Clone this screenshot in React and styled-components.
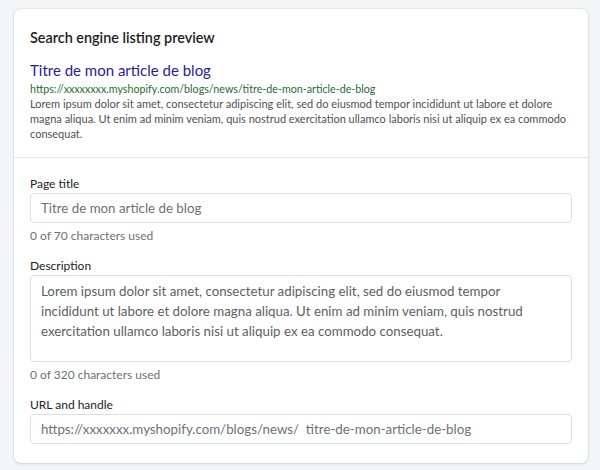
import React from "react";
import styled, { createGlobalStyle } from "styled-components";

const Global = createGlobalStyle`
  html, body { margin: 0; padding: 0; background: #f4f5f7; }
  body { font-family: Lato, "Noto Sans", sans-serif; color: #202223; }
  * { box-sizing: border-box; }
`;

const Page = styled.div`
  width: 600px;
  height: 470px;
  padding: 9px 12px 0 14px;
`;

const Card = styled.section`
  background: #fff;
  border-radius: 7px;
  box-shadow: 0 0 0 1px rgba(63, 63, 68, 0.05), 0 1px 3px rgba(63, 63, 68, 0.15);
  overflow: hidden;
`;

const Section = styled.div`
  padding: ${(p) => p.$pad || "16px"};
  & + & {
    border-top: 1px solid #e4e5e7;
  }
`;

const CardTitle = styled.h2`
  margin: 0 0 11px;
  font-size: 14.4px;
  font-weight: 600;
  line-height: 20px;
  color: #1c1d1f;
`;

const ResultTitle = styled.div`
  font-size: 15px;
  line-height: 22px;
  color: #2a1d92;
`;

const ResultUrl = styled.div`
  font-size: 10.7px;
  line-height: 15px;
  color: #2a6a33;
`;

const ResultDesc = styled.p`
  margin: 0;
  font-size: 11px;
  line-height: 15px;
  color: #4f5154;
`;

const Field = styled.div`
  display: flex;
  flex-direction: column;
  & + & {
    margin-top: 10px;
  }
`;

const Label = styled.label`
  font-size: 12px;
  line-height: 19px;
  color: #202223;
`;

const Input = styled.div`
  border: 1px solid #dcdfe3;
  border-radius: 4px;
  padding: ${(p) => (p.$multi ? "5px 10px" : "4px 10px")};
  height: ${(p) => (p.$multi ? "87px" : "30px")};
  font-size: 13.3px;
  line-height: 20px;
  color: ${(p) => (p.$multi ? "#5c5f62" : "#6d7175")};
  white-space: pre-wrap;
`;

const Help = styled.div`
  font-size: 12px;
  line-height: 20px;
  margin-top: 3px;
  color: #6d7175;
`;

export default function App() {
  const lorem =
    "Lorem ipsum dolor sit amet, consectetur adipiscing elit, sed do eiusmod tempor incididunt ut labore et dolore magna aliqua. Ut enim ad minim veniam, quis nostrud exercitation ullamco laboris nisi ut aliquip ex ea commodo consequat.";
  return (
    <>
      <Global />
      <Page>
        <Card>
          <Section $pad="19px 16px 16px">
            <CardTitle>Search engine listing preview</CardTitle>
            <ResultTitle>Titre de mon article de blog</ResultTitle>
            <ResultUrl>https://xxxxxxxx.myshopify.com/blogs/news/titre-de-mon-article-de-blog</ResultUrl>
            <ResultDesc>{lorem}</ResultDesc>
          </Section>
          <Section $pad="16px 16px 19px">
            <Field>
              <Label>Page title</Label>
              <Input>Titre de mon article de blog</Input>
              <Help>0 of 70 characters used</Help>
            </Field>
            <Field>
              <Label>Description</Label>
              <Input $multi>{lorem}</Input>
              <Help>0 of 320 characters used</Help>
            </Field>
            <Field>
              <Label>URL and handle</Label>
              <Input>https://xxxxxxx.myshopify.com/blogs/news/  titre-de-mon-article-de-blog</Input>
            </Field>
          </Section>
        </Card>
      </Page>
    </>
  );
}
